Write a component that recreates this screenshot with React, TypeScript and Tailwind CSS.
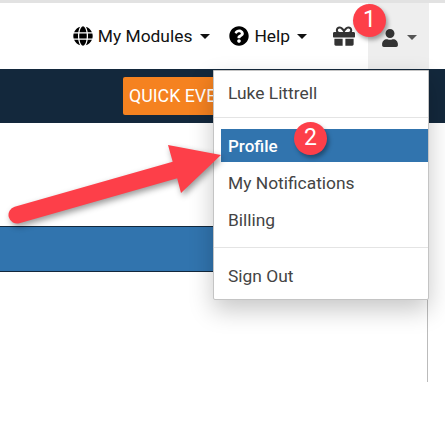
import { FaGift, FaGlobe, FaQuestionCircle, FaUser } from "react-icons/fa";

function Caret({ className }: { className: string }) {
  return (
    <span
      className={`h-0 w-0 border-x-[5px] border-t-[5px] border-x-transparent ${className}`}
    />
  );
}

function Badge({ className, children }: { className: string; children: React.ReactNode }) {
  return (
    <div
      className={`absolute flex h-[33px] w-[33px] items-center justify-center rounded-full bg-[#fd3f49] text-[23px] text-white shadow-[2px_3px_4px_rgba(0,0,0,0.35)] ${className}`}
    >
      {children}
    </div>
  );
}

function Arrow() {
  return (
    <svg
      className="absolute left-0 top-[130px] drop-shadow-[2px_3px_3px_rgba(0,0,0,0.4)]"
      width="240"
      height="110"
      viewBox="0 130 240 110"
    >
      <path d="M17 215 L175 170" stroke="#fd3f49" strokeWidth="17" strokeLinecap="round" fill="none" />
      <polygon points="221,155 168,145 175,170 181,193" fill="#fd3f49" />
    </svg>
  );
}

export default function App() {
  return (
    <div className="relative h-[445px] w-[445px] overflow-hidden bg-white font-['Roboto',sans-serif]">
      <div className="h-[3px] bg-[#e2e2e2]" />

      <nav className="flex h-[66px] pr-[16px] text-[17.4px] text-[#111]">
        <div className="flex flex-1 items-center justify-end">
          <FaGlobe className="text-[20px] text-black" />
          <span className="ml-[5px]">My Modules</span>
          <Caret className="ml-[8px] border-t-[#111]" />
          <FaQuestionCircle className="ml-[19px] text-[20px] text-black" />
          <span className="ml-[5px]">Help</span>
          <Caret className="ml-[7px] border-t-[#111]" />
          <FaGift className="ml-[26px] text-[22px] text-[#333]" />
          <div className="w-[13px]" />
        </div>
        <div className="flex w-[61px] items-center bg-[#eeeeee] pl-[13px] pt-[3px]">
          <FaUser className="text-[18px] text-[#333]" />
          <Caret className="ml-[8px] border-t-[#555]" />
        </div>
      </nav>

      <div className="flex h-[54px] items-center bg-[#13283c] pl-[123px]">
        <button className="h-[38px] w-[306px] rounded-[2px] bg-[#f58220] pl-[6px] text-left text-[17.8px] whitespace-nowrap text-white">
          QUICK EVE
        </button>
      </div>

      <div className="h-[259px] w-[428px] border-r border-[#bbbbbb] pt-[103px]">
        <div className="h-[46px] border-y border-[#13283c] bg-[#3174ae]" />
      </div>

      <div className="absolute left-[213px] top-[70px] h-[230px] w-[216px] rounded-b-[2px] border border-[#c4c4c4] bg-white text-[17.4px] text-[#444] shadow-[0_10px_24px_rgba(0,0,0,0.22)]">
        <div className="flex h-[46px] items-center pb-[2px] pl-[14px]">Luke Littrell</div>
        <div className="h-px bg-[#e4e4e4]" />
        <div className="ml-[7px] mt-[11px] flex h-[33px] items-center bg-[#3174ae] pl-[7px] pt-[2px] text-[17px] font-medium text-white">
          Profile
        </div>
        <div className="mt-[3px] flex h-[37px] items-center pl-[14px]">My Notifications</div>
        <div className="flex h-[37px] items-center pl-[14px]">Billing</div>
        <div className="mt-[8px] h-px bg-[#e4e4e4]" />
        <div className="mt-[10px] flex h-[37px] items-center pl-[14px]">Sign Out</div>
      </div>

      <Arrow />
      <Badge className="left-[353px] top-[4px]">1</Badge>
      <Badge className="left-[294px] top-[122px]">2</Badge>
    </div>
  );
}
